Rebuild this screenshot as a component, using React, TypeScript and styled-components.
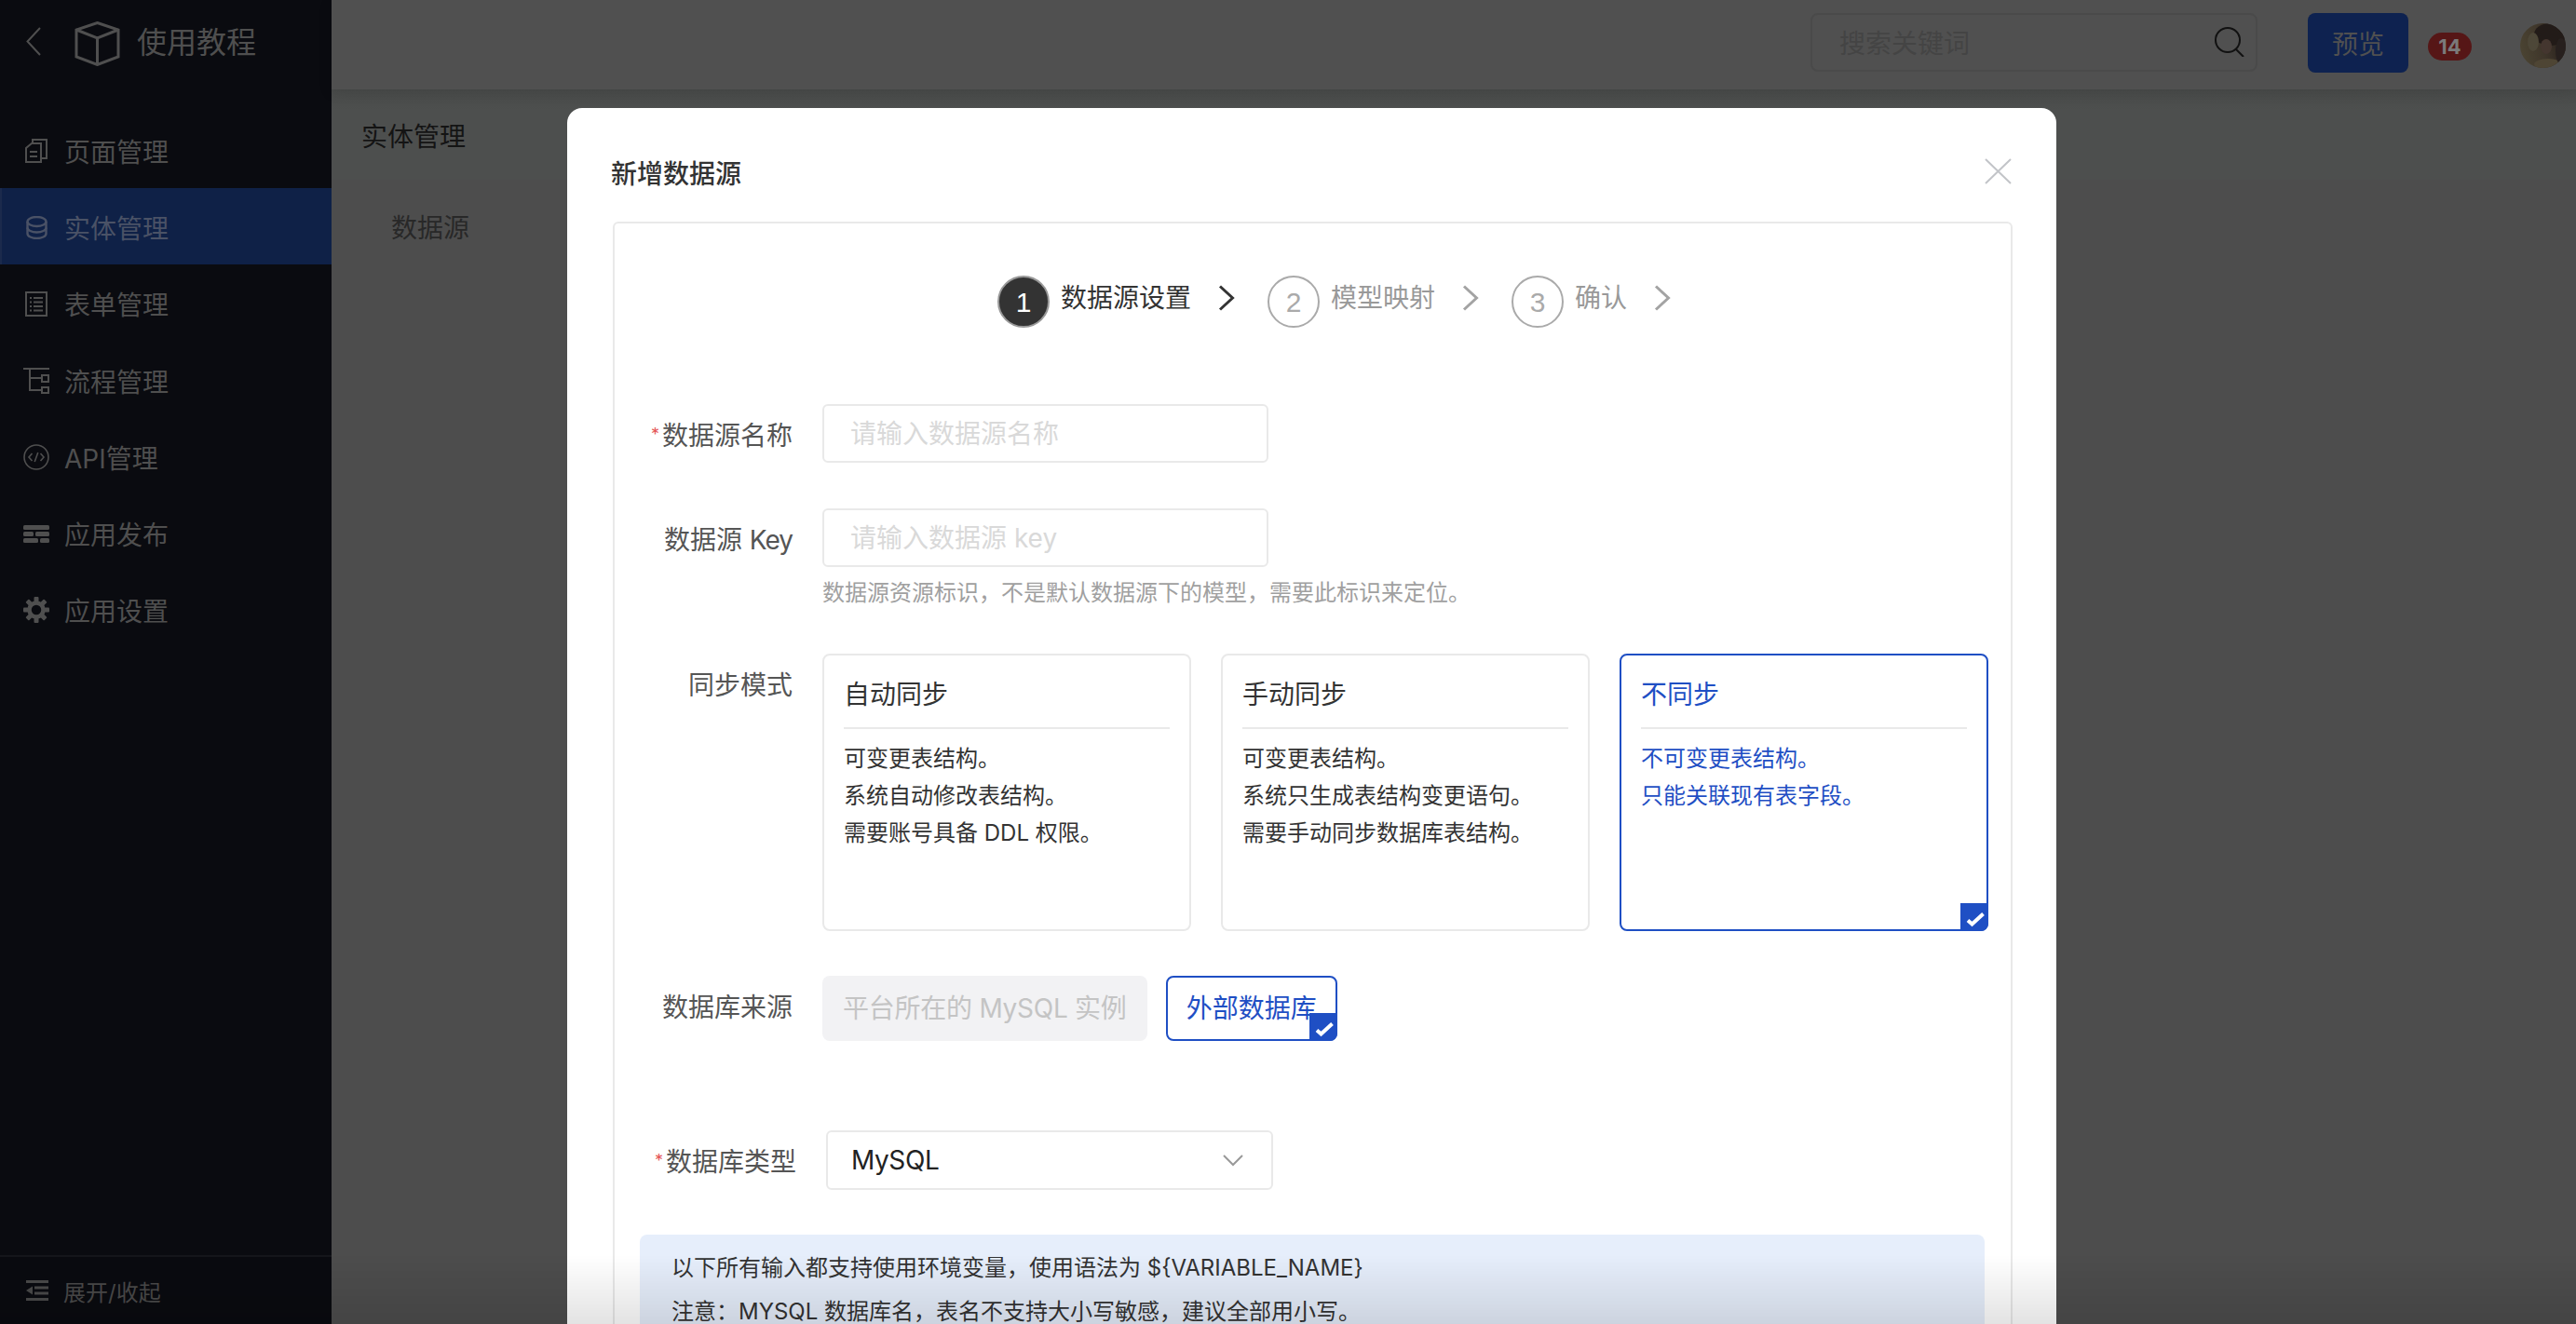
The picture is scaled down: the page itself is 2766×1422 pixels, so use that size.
import React from "react";
import styled, { createGlobalStyle } from "styled-components";

const Global = createGlobalStyle`
  html, body { margin: 0; padding: 0; height: 100%; overflow: hidden; }
  body { font-family: Inter, "Noto Sans CJK SC", sans-serif; font-size: 28px; }
  * { box-sizing: border-box; }
`;

const Page = styled.div`
  display: flex;
  width: 100vw;
  height: 100vh;
  overflow: hidden;
  background: #4d4d4d;
`;

const Sidebar = styled.aside`
  flex: 0 0 356px;
  display: flex;
  flex-direction: column;
  background: #0a0b10;
  color: #4f4f4f;
`;

const Brand = styled.div`
  height: 120px;
  padding: 23px 0 0 28px;
  display: flex;
  align-items: flex-start;
`;

const BackIcon = styled.svg`
  width: 16px;
  height: 31px;
  margin-top: 6px;
`;

const CubeIcon = styled.svg`
  width: 49px;
  height: 48px;
  margin-left: 36px;
`;

const BrandTitle = styled.span`
  margin-left: 18px;
  font-size: 32px;
  line-height: 46px;
`;

const MenuItem = styled.div<{ $active?: boolean }>`
  height: 82.2px;
  display: flex;
  align-items: center;
  gap: 16px;
  padding-top: 2px;
  padding-left: ${(p) => (p.$active ? "23px" : "25px")};
  background: ${(p) => (p.$active ? "#0f2147" : "transparent")};
  border-left: ${(p) => (p.$active ? "2px solid #1b2a4c" : "none")};
  color: ${(p) => (p.$active ? "#4a5266" : "#4f4f4f")};
`;

const MenuIconBox = styled.span`
  flex: 0 0 28px;
  height: 28px;
  display: flex;
  align-items: center;
  justify-content: center;
`;

const SidebarFooter = styled.div`
  margin-top: auto;
  height: 74px;
  border-top: 2px solid #15161b;
  display: flex;
  align-items: center;
  gap: 16px;
  padding-left: 28px;
  font-size: 24px;
  color: #4a4a4a;
`;

const Main = styled.main`
  flex: 1;
  min-width: 0;
  display: flex;
  flex-direction: column;
`;

const Header = styled.header`
  height: 96px;
  flex: none;
  display: flex;
  align-items: flex-start;
  padding: 14px 11px 0 0;
  justify-content: flex-end;
  background: #505050;
  box-shadow: 0 3px 14px rgba(0, 0, 0, 0.1);
  position: relative;
`;

const SearchBox = styled.div`
  width: 480px;
  height: 63px;
  border: 2px solid #4a4a4a;
  border-radius: 8px;
  padding: 0 12px 2px 29px;
  display: flex;
  align-items: center;
  justify-content: space-between;
  color: #444;
`;

const PreviewButton = styled.button`
  width: 108px;
  height: 64px;
  margin-left: 54px;
  border: none;
  border-radius: 8px;
  background: #0e2250;
  color: #505050;
  font: inherit;
  padding: 0;
`;

const Badge = styled.span`
  width: 47px;
  height: 30px;
  margin: 21px 0 0 21px;
  border-radius: 15px;
  background: #561616;
  color: #7a7a7a;
  font-size: 22px;
  font-weight: 700;
  line-height: 30px;
  text-align: center;
`;

const AvatarSvg = styled.svg`
  width: 49px;
  height: 48px;
  margin: 11px 0 0 52px;
`;

const TitleRow = styled.div`
  height: 97px;
  flex: none;
  padding-left: 32px;
  display: flex;
  align-items: center;
  background: linear-gradient(#494b4a, #4d4f4e 22px);
  color: #141414;
`;

const SubItem = styled.div`
  padding: 2px 0 0 64px;
  line-height: 100px;
  color: #282828;
`;

const ModalLayer = styled.div`
  position: fixed;
  inset: 0;
  overflow: hidden;
`;

const Modal = styled.div`
  position: absolute;
  left: 609px;
  top: 116px;
  width: 1599px;
  height: 1500px;
  background: #fff;
  border-radius: 16px 16px 0 0;
  padding: 0 47px 0 49px;
`;

const ModalTitle = styled.h2`
  margin: 0 0 0 -2px;
  height: 122px;
  padding-top: 51px;
  font-size: 28px;
  font-weight: 500;
  line-height: 40px;
  color: #333;
`;

const CloseIcon = styled.svg`
  position: absolute;
  top: 54px;
  right: 48px;
  width: 29px;
  height: 28px;
`;

const Card = styled.div`
  border: 2px solid #e9e9e9;
  border-radius: 6px;
  height: 1300px;
  padding-top: 56px;
`;

const Steps = styled.div`
  display: flex;
  align-items: flex-start;
  margin-left: 411px;
  height: 56px;
`;

const StepCircle = styled.span<{ $on?: boolean }>`
  width: 56px;
  height: 56px;
  flex: none;
  border-radius: 50%;
  border: 2px solid ${(p) => (p.$on ? "#999" : "#aaa")};
  background: ${(p) => (p.$on ? "#333" : "#fff")};
  color: ${(p) => (p.$on ? "#fff" : "#aaa")};
  font-family: "Liberation Sans", sans-serif;
  font-size: 30px;
  display: flex;
  align-items: center;
  justify-content: center;
  padding-top: 2px;
`;

const StepText = styled.span<{ $on?: boolean }>`
  margin-left: 12px;
  line-height: 48px;
  color: ${(p) => (p.$on ? "#333" : "#999")};
`;

const StepChevron = styled.svg`
  width: 18px;
  height: 28px;
  margin: 10px 35px 0 29px;
  flex: none;
`;

const Row = styled.div<{ $top: number; $shift?: number }>`
  display: flex;
  align-items: flex-start;
  margin-top: ${(p) => p.$top}px;
  padding-left: ${(p) => p.$shift ?? 0}px;
`;

const Label = styled.label`
  flex: 0 0 191px;
  margin-right: 32px;
  text-align: right;
  line-height: 68px;
  color: #555;
  white-space: nowrap;
`;

const Latin = styled.span`
  letter-spacing: -1px;
`;

const Req = styled.span`
  color: #e55656;
  font-size: 18px;
  line-height: 0;
  vertical-align: 5px;
  margin-right: 3px;
`;

const FieldColumn = styled.div`
  display: flex;
  flex-direction: column;
`;

const TextInput = styled.div`
  width: 479px;
  height: 63px;
  border: 2px solid #e9e9e9;
  border-radius: 6px;
  padding: 0 28px;
  line-height: 61px;
  color: #d9d9d9;
`;

const Help = styled.div`
  font-size: 24px;
  line-height: 34px;
  margin-top: 11px;
  color: #a0a0a0;
  white-space: nowrap;
`;

const Options = styled.div`
  display: flex;
  gap: 32px;
`;

const OptionCard = styled.div<{ $on?: boolean }>`
  position: relative;
  width: 396px;
  height: 298px;
  border: 2px solid ${(p) => (p.$on ? "#1f4fc4" : "#e9e9e9")};
  border-radius: 8px;
  padding: 0 21px;
  color: ${(p) => (p.$on ? "#1f4fc4" : "#333")};
`;

const OptionTitle = styled.div`
  height: 79px;
  padding-top: 20px;
  line-height: 44px;
  border-bottom: 2px solid #e9e9e9;
`;

const OptionBody = styled.div`
  padding-top: 12px;
  font-size: 24px;
  line-height: 40px;
  white-space: nowrap;
`;

const CheckBadge = styled.svg`
  position: absolute;
  right: -2px;
  bottom: -2px;
  width: 30px;
  height: 30px;
`;

const Tags = styled.div`
  display: flex;
  gap: 20px;
`;

const DisabledTag = styled.div`
  height: 70px;
  padding: 0 22px;
  border-radius: 8px;
  background: #f2f2f4;
  color: #c4c4c4;
  line-height: 70px;
  letter-spacing: -0.25px;
  white-space: nowrap;
`;

const ActiveTag = styled.div`
  position: relative;
  height: 70px;
  width: 184px;
  padding-left: 20px;
  border: 2px solid #1f4fc4;
  border-radius: 8px;
  color: #1f4fc4;
  line-height: 66px;
  white-space: nowrap;
`;

const Select = styled.div`
  width: 480px;
  height: 64px;
  border: 2px solid #e9e9e9;
  border-radius: 6px;
  padding: 0 30px 0 25px;
  display: flex;
  align-items: center;
  justify-content: space-between;
  letter-spacing: -0.4px;
  color: #222;
`;

const Info = styled.div`
  margin: 44px 0 0 27px;
  width: 1444px;
  min-height: 160px;
  padding: 12px 0 0 34px;
  background: #e6eefb;
  border-radius: 8px;
  font-size: 24px;
  line-height: 47px;
  color: #333;
`;

const BottomFade = styled.div`
  position: fixed;
  left: 0;
  right: 0;
  bottom: 0;
  height: 74px;
  background: linear-gradient(rgba(0, 0, 0, 0), rgba(0, 0, 0, 0.11));
  pointer-events: none;
`;

const stroke = { fill: "none", stroke: "currentColor", strokeWidth: 2 } as const;

const PageIcon = () => (
  <svg width="24" height="26" viewBox="0 0 24 26" {...stroke}>
    <path d="M1 25V10l6-5h10v20z" />
    <path d="M8 5V1h15v20h-6" />
    <path d="M5 14h8M5 19h8" />
  </svg>
);
const DbIcon = () => (
  <svg width="23" height="25" viewBox="0 0 23 25" {...stroke} strokeWidth="2.4">
    <ellipse cx="11.5" cy="6" rx="10" ry="5" />
    <path d="M1.5 6v13c0 2.8 4.5 5 10 5s10-2.2 10-5V6" />
    <path d="M1.5 12.5c0 2.8 4.5 5 10 5s10-2.2 10-5" />
  </svg>
);
const FormIcon = () => (
  <svg width="24" height="27" viewBox="0 0 24 27" {...stroke}>
    <rect x="1" y="1" width="22" height="25" />
    <path d="M5 7h2M9 7h10M5 11.5h2M9 11.5h10M5 16h2M9 16h10M5 20.5h2M9 20.5h10" />
  </svg>
);
const FlowIcon = () => (
  <svg width="28" height="28" viewBox="0 0 28 28" {...stroke}>
    <path d="M0 1h28M7 1v23h13M7 11h13" />
    <rect x="20" y="8" width="7" height="7" />
    <rect x="20" y="21" width="7" height="6" />
  </svg>
);
const ApiIcon = () => (
  <svg width="28" height="28" viewBox="0 0 28 28" {...stroke} strokeWidth="1.6">
    <circle cx="14" cy="14" r="13" />
    <path d="M9.500 10 6 14l3.500 4M18.500 10l3.500 4-3.500 4M15.800 9l-3.600 10" />
  </svg>
);
const PublishIcon = () => (
  <svg width="28" height="19" viewBox="0 0 28 19" fill="currentColor">
    <rect width="28" height="5" rx="1.500" />
    <rect y="7" width="11" height="5" rx="1.500" />
    <rect x="13" y="7" width="15" height="5" rx="1.500" />
    <rect y="14" width="16" height="5" rx="1.500" />
    <rect x="18" y="14" width="10" height="5" rx="1.500" />
  </svg>
);
const GearIcon = () => (
  <svg width="28" height="28" viewBox="0 0 28 28" fill="currentColor">
    <circle cx="14" cy="14" r="7.500" fill="none" stroke="currentColor" strokeWidth="4.500" />
    {[0, 45, 90, 135, 180, 225, 270, 315].map((a) => (
      <rect key={a} x="11.500" y="0" width="5" height="5.500" rx="1" transform={`rotate(${a} 14 14)`} />
    ))}
  </svg>
);
const CollapseIcon = () => (
  <svg width="24" height="22" viewBox="0 0 24 22" fill="currentColor">
    <rect width="24" height="3" />
    <rect x="9" y="6.500" width="15" height="3" />
    <rect x="9" y="12.500" width="15" height="3" />
    <rect y="19" width="24" height="3" />
    <path d="M0 11l7-4.500v9z" />
  </svg>
);
const SearchIcon = () => (
  <svg width="33" height="32" viewBox="0 0 33 32" fill="none" stroke="#111" strokeWidth="2">
    <circle cx="15" cy="14" r="13" />
    <path d="M24 24l8 8" />
  </svg>
);
const Avatar = () => (
  <AvatarSvg viewBox="0 0 49 48">
    <defs>
      <linearGradient id="av" x1="0" x2="1" y1="0.500" y2="0.300">
        <stop offset="0" stopColor="#4a4332" />
        <stop offset="0.500" stopColor="#3e352a" />
        <stop offset="1" stopColor="#241d1a" />
      </linearGradient>
      <clipPath id="avc"><ellipse cx="24.500" cy="24" rx="24.500" ry="24" /></clipPath>
    </defs>
    <g clipPath="url(#avc)">
      <rect width="49" height="48" fill="url(#av)" />
      <ellipse cx="32" cy="12" rx="17" ry="12" fill="#221b18" />
      <ellipse cx="28" cy="25" rx="6" ry="8" fill="#44362f" />
      <ellipse cx="14" cy="20" rx="6" ry="10" fill="#4d4738" />
      <ellipse cx="30" cy="44" rx="15" ry="6" fill="#4e4534" />
      <ellipse cx="44" cy="30" rx="6" ry="14" fill="#27201e" />
    </g>
  </AvatarSvg>
);
const Check = () => (
  <CheckBadge viewBox="0 0 30 30">
    <path d="M0 0h30v22a8 8 0 0 1-8 8H0z" fill="#1f4fc4" />
    <path d="M8 18.500l4.500 4L24.500 11.500" fill="none" stroke="#fff" strokeWidth="4" />
  </CheckBadge>
);
const Chevron = ({ color }: { color: string }) => (
  <StepChevron viewBox="0 0 18 28" fill="none" stroke={color} strokeWidth="3">
    <path d="M2 1.500 15.500 14 2 26.500" />
  </StepChevron>
);

const menu = [
  { label: "页面管理", icon: <PageIcon /> },
  { label: "实体管理", icon: <DbIcon />, active: true },
  { label: "表单管理", icon: <FormIcon /> },
  { label: "流程管理", icon: <FlowIcon /> },
  { label: "API管理", icon: <ApiIcon /> },
  { label: "应用发布", icon: <PublishIcon /> },
  { label: "应用设置", icon: <GearIcon /> },
];

const options = [
  { title: "自动同步", lines: ["可变更表结构。", "系统自动修改表结构。", "需要账号具备 DDL 权限。"] },
  { title: "手动同步", lines: ["可变更表结构。", "系统只生成表结构变更语句。", "需要手动同步数据库表结构。"] },
  { title: "不同步", lines: ["不可变更表结构。", "只能关联现有表字段。"], on: true },
];

const steps = [
  { n: 1, text: "数据源设置", on: true },
  { n: 2, text: "模型映射" },
  { n: 3, text: "确认" },
];

export default function App() {
  return (
    <Page>
      <Global />
      <Sidebar>
        <Brand>
          <BackIcon viewBox="0 0 16 31" fill="none" stroke="currentColor" strokeWidth="2">
            <path d="M15 1 1.500 15.500 15 30" />
          </BackIcon>
          <CubeIcon viewBox="0 0 49 48" fill="none" stroke="currentColor" strokeWidth="3">
            <path d="M24.500 1.500 47 9v29l-22.500 8.500L2 38V9z" />
            <path d="M2 9l22.500 9L47 9M24.500 18v28" />
          </CubeIcon>
          <BrandTitle>使用教程</BrandTitle>
        </Brand>
        {menu.map((m) => (
          <MenuItem key={m.label} $active={m.active}>
            <MenuIconBox>{m.icon}</MenuIconBox>
            {m.label}
          </MenuItem>
        ))}
        <SidebarFooter>
          <CollapseIcon />
          展开/收起
        </SidebarFooter>
      </Sidebar>
      <Main>
        <Header>
          <SearchBox>
            搜索关键词
            <SearchIcon />
          </SearchBox>
          <PreviewButton>预览</PreviewButton>
          <Badge>14</Badge>
          <Avatar />
        </Header>
        <TitleRow>实体管理</TitleRow>
        <SubItem>数据源</SubItem>
      </Main>
      <ModalLayer>
        <Modal>
          <ModalTitle>新增数据源</ModalTitle>
          <CloseIcon viewBox="0 0 29 28" fill="none" stroke="#c2c4c8" strokeWidth="2">
            <path d="M1 1l27 26M28 1 1 27" />
          </CloseIcon>
          <Card>
            <Steps>
              {steps.map((s) => (
                <React.Fragment key={s.n}>
                  <StepCircle $on={s.on}>{s.n}</StepCircle>
                  <StepText $on={s.on}>{s.text}</StepText>
                  <Chevron color={s.on ? "#333" : "#a3a3a3"} />
                </React.Fragment>
              ))}
            </Steps>
            <Row $top={82}>
              <Label><Req>*</Req>数据源名称</Label>
              <TextInput>请输入数据源名称</TextInput>
            </Row>
            <Row $top={44}>
              <Label>数据源 <Latin>Key</Latin></Label>
              <FieldColumn>
                <TextInput>请输入数据源 key</TextInput>
                <Help>数据源资源标识，不是默认数据源下的模型，需要此标识来定位。</Help>
              </FieldColumn>
            </Row>
            <Row $top={48}>
              <Label>同步模式</Label>
              <Options>
                {options.map((o) => (
                  <OptionCard key={o.title} $on={o.on}>
                    <OptionTitle>{o.title}</OptionTitle>
                    <OptionBody>
                      {o.lines.map((l) => (
                        <div key={l}>{l}</div>
                      ))}
                    </OptionBody>
                    {o.on && <Check />}
                  </OptionCard>
                ))}
              </Options>
            </Row>
            <Row $top={48}>
              <Label>数据库来源</Label>
              <Tags>
                <DisabledTag>平台所在的 MySQL 实例</DisabledTag>
                <ActiveTag>
                  外部数据库
                  <Check />
                </ActiveTag>
              </Tags>
            </Row>
            <Row $top={96} $shift={4}>
              <Label><Req>*</Req>数据库类型</Label>
              <Select>
                MySQL
                <svg width="22" height="13" viewBox="0 0 22 13" fill="none" stroke="#999" strokeWidth="2">
                  <path d="M1 1l10 10L21 1" />
                </svg>
              </Select>
            </Row>
            <Info>
              <div>以下所有输入都支持使用环境变量，使用语法为 {"${VARIABLE_NAME}"}</div>
              <div>注意：MYSQL 数据库名，表名不支持大小写敏感，建议全部用小写。</div>
            </Info>
          </Card>
        </Modal>
        <BottomFade />
      </ModalLayer>
    </Page>
  );
}
